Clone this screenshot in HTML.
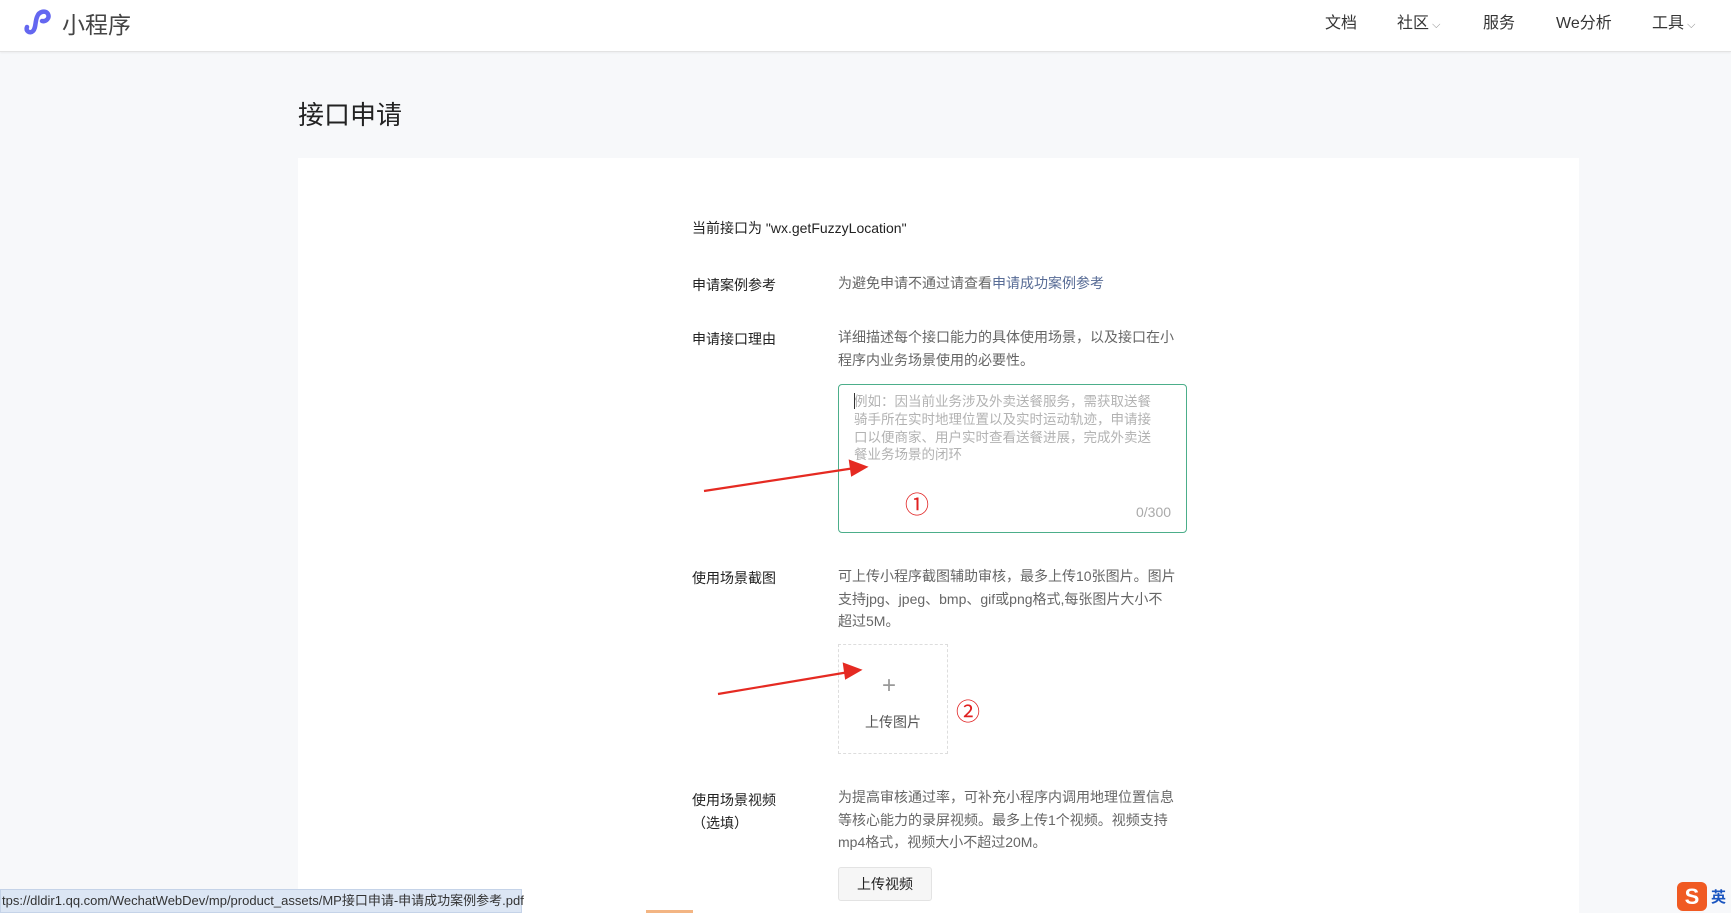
<!DOCTYPE html>
<html style="overflow:hidden;width:1731px;height:913px"><head><meta charset="utf-8"><style>
*{margin:0;padding:0;box-sizing:border-box}
body{width:1731px;height:913px;overflow:hidden;background:#f7f8fa;font-family:"Liberation Sans","Noto Sans CJK SC",sans-serif;color:#333;position:relative}
.a{position:absolute;white-space:nowrap}
.hdr{position:absolute;left:0;top:0;width:1731px;height:52px;background:#fff;border-bottom:1px solid #e3e3e3;box-shadow:0 1px 2px rgba(0,0,0,.05)}
.nav{font-size:16px;color:#353535;top:9px}
.card{position:absolute;left:298px;top:158px;width:1281px;height:755px;background:#fff}
.lbl{font-size:14px;color:#222}
.txt{font-size:14px;color:#666;line-height:22.5px}
.ph{font-size:13.5px;color:#b2b2b2;line-height:17.8px}
</style></head><body>
<div class="hdr"></div>
<svg class="a" style="left:21px;top:5px" width="33" height="30" viewBox="0 0 33 30"><path d="M6 22 C4 26 9 29 12 26 C15 23 14 17 16 12 C18 6 25 5 27 9 C29 13 25 17 21 16" fill="none" stroke="#6467f0" stroke-width="4.5" stroke-linecap="round"/></svg>
<div class="a" style="left:62px;top:6px;font-size:23px;color:#444">小程序</div>
<div class="a nav" style="left:1325px">文档</div>
<div class="a nav" style="left:1397px">社区<span style="font-size:11px;color:#888"> ⌵</span></div>
<div class="a nav" style="left:1483px">服务</div>
<div class="a nav" style="left:1556px">We分析</div>
<div class="a nav" style="left:1652px">工具<span style="font-size:11px;color:#888"> ⌵</span></div>
<div class="a" style="left:298px;top:95px;font-size:26px;color:#222">接口申请</div>
<div class="card"></div>
<div class="a lbl" style="left:692px;top:218px">当前接口为 "wx.getFuzzyLocation"</div>
<div class="a lbl" style="left:692px;top:275px">申请案例参考</div>
<div class="a txt" style="left:838px;top:272px">为避免申请不通过请查看<span style="color:#576b95">申请成功案例参考</span></div>
<div class="a lbl" style="left:692px;top:329px">申请接口理由</div>
<div class="a txt" style="left:838px;top:326px">详细描述每个接口能力的具体使用场景，以及接口在小<br>程序内业务场景使用的必要性。</div>
<div class="a" style="left:838px;top:384px;width:349px;height:149px;border:1.5px solid #4cae8a;border-radius:4px"></div>
<div class="a ph" style="left:854px;top:393px">例如：因当前业务涉及外卖送餐服务，需获取送餐<br>骑手所在实时地理位置以及实时运动轨迹，申请接<br>口以便商家、用户实时查看送餐进展，完成外卖送<br>餐业务场景的闭环</div>
<div class="a" style="left:854px;top:393px;width:1px;height:16px;background:#333"></div>
<div class="a" style="left:1136px;top:504px;font-size:14px;color:#aaa">0/300</div>
<div class="a" style="left:905px;top:485px;font-size:24px;color:#e02020">①</div>
<div class="a lbl" style="left:692px;top:568px">使用场景截图</div>
<div class="a txt" style="left:838px;top:565px">可上传小程序截图辅助审核，最多上传10张图片。图片<br>支持jpg、jpeg、bmp、gif或png格式,每张图片大小不<br>超过5M。</div>
<div class="a" style="left:838px;top:644px;width:110px;height:110px;border:1px dashed #ddd"></div>
<div class="a" style="left:882px;top:672px;font-size:24px;color:#999;font-weight:200">+</div>
<div class="a" style="left:865px;top:712px;font-size:14px;color:#555">上传图片</div>
<div class="a" style="left:956px;top:692px;font-size:24px;color:#e02020">②</div>
<div class="a lbl" style="left:692px;top:789px;line-height:23px">使用场景视频<br>（选填）</div>
<div class="a txt" style="left:838px;top:786px">为提高审核通过率，可补充小程序内调用地理位置信息<br>等核心能力的录屏视频。最多上传1个视频。视频支持<br>mp4格式，视频大小不超过20M。</div>
<div class="a" style="left:838px;top:867px;width:94px;height:34px;border:1px solid #e3e3e3;background:#f6f6f6;border-radius:3px;font-size:14px;color:#222;text-align:center;line-height:32px">上传视频</div>
<svg class="a" style="left:0;top:0" width="1731" height="913"><g stroke="#e52a22" stroke-width="2.2" fill="#e52a22"><line x1="704" y1="491" x2="855" y2="468"/><polygon points="866,467 850,461 852,475"/><line x1="718" y1="694" x2="849" y2="672"/><polygon points="860,670 844,664 846,678"/></g></svg>
<div class="a" style="left:0;top:889px;width:522px;height:24px;background:#dce6f4;border:1px solid #c5d3e8;font-size:13px;color:#333;line-height:22px;padding-left:1px">tps://dldir1.qq.com/WechatWebDev/mp/product_assets/MP接口申请-申请成功案例参考.pdf</div>
<div class="a" style="left:646px;top:910px;width:47px;height:3px;background:#f3b583"></div>
<div class="a" style="left:1677px;top:882px;width:30px;height:29px;background:#f05a22;border-radius:6px;color:#fff;font-weight:bold;font-size:22px;text-align:center;line-height:29px">S</div>
<div class="a" style="left:1711px;top:886px;font-size:15px;color:#1a55c0;font-weight:bold">英</div>
</body></html>
